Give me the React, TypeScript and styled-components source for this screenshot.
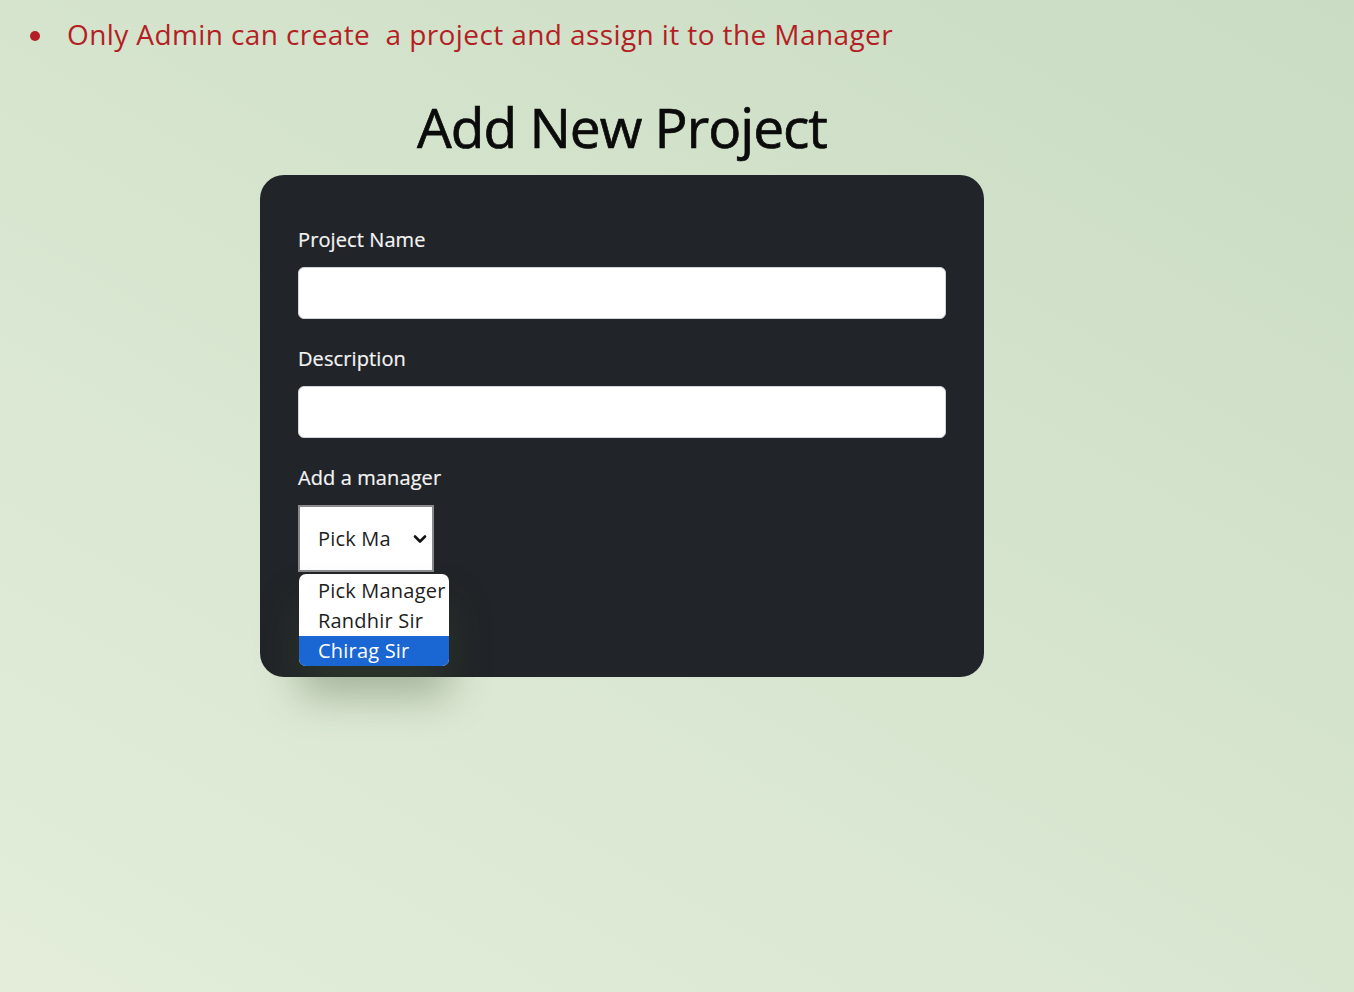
import React from "react";
import styled, { createGlobalStyle } from "styled-components";

const GlobalStyle = createGlobalStyle`
  html, body { margin: 0; padding: 0; }
  body {
    width: 1354px;
    height: 992px;
    overflow: hidden;
    background: linear-gradient(30deg, #e3edda 0%, #d7e5cf 50%, #cadcc3 100%);
    font-family: "Open Sans", "Noto Sans", sans-serif;
  }
`;

const Page = styled.div`
  width: 1354px;
  height: 992px;
  display: flex;
  flex-direction: column;
`;

const NoteList = styled.ul`
  margin: 0;
  padding: 14px 0 0 67px;
  list-style: none;
`;

const NoteItem = styled.li`
  position: relative;
  color: #b31f24;
  font-family: "Open Sans", sans-serif;
  font-size: 28px;
  line-height: 40px;
  letter-spacing: 0.4px;
  white-space: pre;
  &::before {
    content: "";
    position: absolute;
    left: -37px;
    top: 17px;
    width: 10px;
    height: 10px;
    border-radius: 50%;
    background: #b31f24;
  }
`;

const Main = styled.main`
  width: 1244px;
  display: flex;
  flex-direction: column;
  align-items: center;
`;

const Title = styled.h1`
  margin: 38px 0 0;
  font-family: "Open Sans", sans-serif;
  font-weight: 500;
  font-size: 55px;
  line-height: 70px;
  color: #0b0b0b;
  letter-spacing: -1px;
  -webkit-text-stroke: 0.7px #0b0b0b;
`;

const Card = styled.form`
  margin-top: 13px;
  width: 724px;
  box-sizing: border-box;
  padding: 51px 38px 105px;
  background: #212428;
  border-radius: 24px;
  display: flex;
  flex-direction: column;
`;

const Label = styled.label`
  color: #f4f4f4;
  font-family: "Open Sans", sans-serif;
  font-weight: 500;
  font-size: 20px;
  line-height: 28px;
  letter-spacing: 0.1px;
  -webkit-text-stroke: 0.2px #f4f4f4;
  margin-bottom: 13px;
`;

const TextInput = styled.div`
  height: 52px;
  box-sizing: border-box;
  background: #ffffff;
  border: 1px solid #ced4da;
  border-radius: 6px;
  margin-bottom: 26px;
`;

const SelectWrap = styled.div`
  position: relative;
  width: 136px;
`;

const SelectBox = styled.div`
  box-sizing: border-box;
  width: 136px;
  height: 67px;
  background: #ffffff;
  border: 2px solid #8a8a8a;
  display: flex;
  align-items: center;
  padding: 0 5px 0 18px;
  gap: 4px;
`;

const SelectText = styled.span`
  flex: 1;
  overflow: hidden;
  white-space: nowrap;
  font-family: "Open Sans", sans-serif;
  font-size: 20px;
  color: #1d1d1d;
  letter-spacing: 0.2px;
`;

const OptionList = styled.ul`
  position: absolute;
  left: 1px;
  top: 69px;
  width: 150px;
  margin: 0;
  padding: 2px 0 0;
  list-style: none;
  background: #ffffff;
  border-radius: 7px;
  overflow: hidden;
  box-shadow: 0 30px 40px rgba(60, 80, 50, 0.35);
`;

const Option = styled.li<{ $active?: boolean }>`
  height: 30px;
  line-height: 30px;
  padding-left: 19px;
  font-family: "Open Sans", sans-serif;
  font-size: 20px;
  letter-spacing: 0.2px;
  white-space: nowrap;
  color: ${(p) => (p.$active ? "#ffffff" : "#1d1d1d")};
  background: ${(p) => (p.$active ? "#1a66d2" : "transparent")};
`;

export default function App() {
  return (
    <Page>
      <GlobalStyle />
      <NoteList>
        <NoteItem>Only Admin can create  a project and assign it to the Manager</NoteItem>
      </NoteList>
      <Main>
        <Title>Add New Project</Title>
        <Card onSubmit={(e) => e.preventDefault()}>
          <Label>Project Name</Label>
          <TextInput />
          <Label>Description</Label>
          <TextInput />
          <Label>Add a manager</Label>
          <SelectWrap>
            <SelectBox>
              <SelectText>Pick Ma</SelectText>
              <svg width="14" height="10" viewBox="0 0 14 10">
                <path d="M2 2.5 L7 7.5 L12 2.5" fill="none" stroke="#111" strokeWidth="2.6" strokeLinecap="round" strokeLinejoin="round" />
              </svg>
            </SelectBox>
            <OptionList>
              <Option>Pick Manager</Option>
              <Option>Randhir Sir</Option>
              <Option $active>Chirag Sir</Option>
            </OptionList>
          </SelectWrap>
        </Card>
      </Main>
    </Page>
  );
}
